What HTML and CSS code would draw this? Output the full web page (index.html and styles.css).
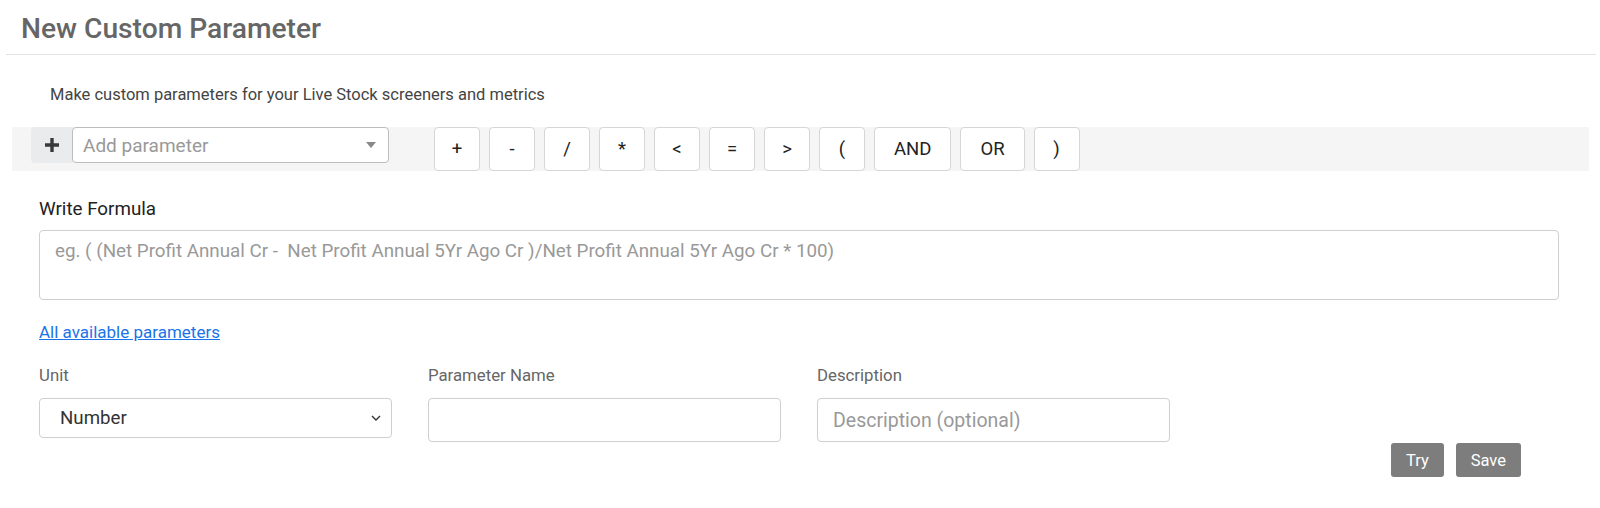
FILE: index.html
```html
<!DOCTYPE html>
<html>
<head>
<meta charset="utf-8">
<link rel="stylesheet" href="styles.css">
</head>
<body>
<div class="page">
  <div class="header"><h1 class="title">New Custom Parameter</h1></div>
  <p class="intro">Make custom parameters for your Live Stock screeners and metrics</p>
  <div class="toolbar">
    <div class="add-group">
      <span class="add-icon">
        <svg width="14" height="14" viewBox="0 0 14 14"><path d="M5.3 0h3.4v5.3H14v3.4H8.7V14H5.3V8.7H0V5.3h5.3z" fill="#3a3a3a"/></svg>
      </span>
      <div class="add-select">
        <span class="placeholder">Add parameter</span>
        <svg class="caret" width="10" height="6" viewBox="0 0 10 6"><path d="M0 0h10L5 6z" fill="#888"/></svg>
      </div>
    </div>
    <div class="ops">
      <button class="op sym">+</button>
      <button class="op sym">-</button>
      <button class="op sym">/</button>
      <button class="op sym">*</button>
      <button class="op sym">&lt;</button>
      <button class="op sym">=</button>
      <button class="op sym">&gt;</button>
      <button class="op sym">(</button>
      <button class="op">AND</button>
      <button class="op">OR</button>
      <button class="op sym">)</button>
    </div>
  </div>
  <div class="formula">
    <label class="formula-label">Write Formula</label>
    <div class="formula-box"><span class="placeholder">eg. ( (Net Profit Annual Cr -&nbsp; Net Profit Annual 5Yr Ago Cr )/Net Profit Annual 5Yr Ago Cr * 100)</span></div>
    <a class="all-link" href="#">All available parameters</a>
  </div>
  <div class="fields">
    <div class="field">
      <div class="field-label">Unit</div>
      <div class="input select">
        <span class="value">Number</span>
        <svg class="chev" width="10" height="6" viewBox="0 0 10 6"><path d="M1 1l4 4 4-4" fill="none" stroke="#333" stroke-width="1.4"/></svg>
      </div>
    </div>
    <div class="field">
      <div class="field-label">Parameter Name</div>
      <div class="input tall"></div>
    </div>
    <div class="field">
      <div class="field-label">Description</div>
      <div class="input tall"><span class="placeholder desc">Description (optional)</span></div>
    </div>
  </div>
  <div class="actions">
    <button class="btn">Try</button>
    <button class="btn">Save</button>
  </div>
</div>
</body>
</html>
```
FILE: styles.css
```css
* { box-sizing: border-box; }
body {
  margin: 0;
  background: #fff;
  font-family: Roboto, "Liberation Sans", sans-serif;
  color: #333;
}
.page { width: 1600px; }
.header {
  margin: 0 4px 0 6px;
  height: 55px;
  border-bottom: 1px solid #e3e3e3;
  padding: 14px 0 0 15px;
}
.title {
  margin: 0;
  font-size: 28.2px;
  font-weight: 500;
  line-height: 30px;
  color: #666;
}
.intro {
  margin: 30px 0 0 50px;
  font-size: 16.5px;
  line-height: 20px;
  color: #444;
}
.toolbar {
  margin: 22px 11px 0 12px;
  height: 44px;
  background: #f5f5f5;
  display: flex;
  align-items: flex-start;
  padding-left: 19px;
}
.add-group { display: flex; height: 36px; }
.add-icon {
  width: 42px;
  height: 36px;
  background: #eaebed;
  border-radius: 4px 0 0 4px;
  display: flex;
  align-items: center;
  justify-content: center;
  margin-right: -1px;
}
.add-select {
  width: 317px;
  height: 36px;
  background: #fff;
  border: 1px solid #bdbdbd;
  border-radius: 4px;
  display: flex;
  align-items: center;
  justify-content: space-between;
  padding: 0 12px 0 10px;
}
.placeholder { color: #999; font-size: 19px; }
.ops { display: flex; gap: 9px; margin-left: 45px; height: 44px; }
.op {
  height: 44px;
  padding: 0 19px;
  background: #fff;
  border: 1px solid #d6d6d6;
  border-radius: 4px;
  font-family: Roboto, "Liberation Sans", sans-serif;
  font-size: 18.5px;
  color: #222;
}
.op.sym { width: 46px; padding: 0; }
.formula { padding: 0 41px 0 39px; }
.formula-label {
  display: block;
  margin-top: 27px;
  font-size: 18.8px;
  line-height: 22px;
  color: #222;
}
.formula-box {
  margin-top: 10px;
  height: 70px;
  border: 1px solid #cfcfcf;
  border-radius: 4px;
  padding: 9px 15px;
}
.formula-box .placeholder { font-size: 18.8px; }
.all-link {
  display: inline-block;
  margin-top: 22px;
  font-size: 17px;
  line-height: 20px;
  color: #1a73e8;
  text-decoration: underline;
}
.fields {
  display: flex;
  gap: 36px;
  padding-left: 39px;
  margin-top: 23px;
}
.field { width: 353px; }
.field-label {
  font-size: 16.8px;
  line-height: 20px;
  color: #666;
}
.input {
  margin-top: 13px;
  height: 40px;
  border: 1px solid #cfcfcf;
  border-radius: 4px;
  display: flex;
  align-items: center;
  padding: 0 15px;
}
.input.tall { height: 44px; }
.placeholder.desc { font-size: 19.5px; }
.select { justify-content: space-between; padding: 0 10px 0 20px; }
.value { font-size: 18.7px; color: #333; }
.actions {
  display: flex;
  justify-content: flex-end;
  gap: 12px;
  padding-right: 79px;
  margin-top: 1px;
}
.btn {
  height: 34px;
  padding: 0 15px;
  background: #7d7d7d;
  color: #fff;
  border: none;
  border-radius: 3px;
  font-family: Roboto, "Liberation Sans", sans-serif;
  font-size: 16.5px;
}
```
